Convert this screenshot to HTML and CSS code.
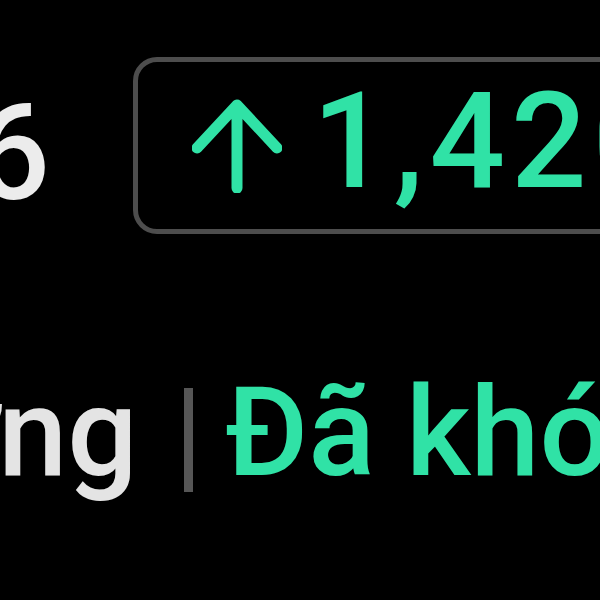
FILE: index.html
```html
<!DOCTYPE html>
<html>
<head>
    <title>Thống kê</title>
    <link rel="stylesheet" href="styles.css">
</head>
<body>
    <div class="stats">
        <div class="total-row">
            <span class="total">1,236</span>
            <div class="change">
                <svg class="arrow" width="90" height="94" viewBox="0 0 90 94">
                    <path d="M45 6 V89 M5 49 L45 6 L85 49" fill="none" stroke="currentColor" stroke-width="11" stroke-linecap="round" stroke-linejoin="round"/>
                </svg>
                <span class="change-value">1,420</span>
            </div>
        </div>

        <div class="status-row">
            <span class="status-label">Ngừng</span>
            <span class="divider"></span>
            <span class="status-locked">Đã khóa</span>
        </div>
    </div>
</body>
</html>
```

FILE: styles.css
```css
body {
    margin: 0;
    padding: 0;
    background-color: #000;
    font-family: Roboto, "Noto Sans", sans-serif;
    width: 600px;
    height: 600px;
    overflow: hidden;
}

.stats {
    width: 1400px;
}

.total-row {
    display: flex;
    align-items: flex-start;
    margin-top: 57px;
    margin-left: -282px;
    white-space: nowrap;
}

.total {
    color: #ececec;
    font-size: 133px;
    font-weight: 500;
    line-height: 1;
    margin-top: 30px;
}

.change {
    display: flex;
    align-items: flex-start;
    margin-left: 83px;
    padding: 13px 40px 21px 54px;
    border: 5px solid #4d4d4d;
    border-radius: 24px;
    color: #30e2a6;
}

.arrow {
    margin-top: 24px;
}

.change-value {
    font-size: 133px;
    font-weight: 500;
    letter-spacing: 6px;
    line-height: 1;
    margin-left: 30px;
}

.status-row {
    display: flex;
    align-items: flex-start;
    margin-top: 137px;
    margin-left: -236px;
    white-space: nowrap;
    font-size: 124px;
    font-weight: 500;
    line-height: 1;
}

.status-label {
    color: #e4e4e4;
}

.divider {
    width: 9px;
    height: 104px;
    margin: 17px 33px 0 46px;
    background-color: #565656;
}

.status-locked {
    color: #30e2a6;
}
```
